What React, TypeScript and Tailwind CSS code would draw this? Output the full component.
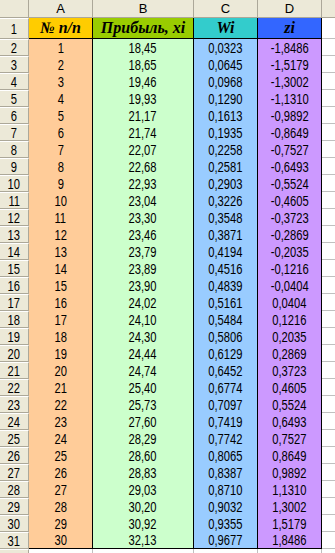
import React from 'react';

const rows: [string, string, string][] = [
  ['18,45', '0,0323', '-1,8486'],
  ['18,65', '0,0645', '-1,5179'],
  ['19,46', '0,0968', '-1,3002'],
  ['19,93', '0,1290', '-1,1310'],
  ['21,17', '0,1613', '-0,9892'],
  ['21,74', '0,1935', '-0,8649'],
  ['22,07', '0,2258', '-0,7527'],
  ['22,68', '0,2581', '-0,6493'],
  ['22,93', '0,2903', '-0,5524'],
  ['23,04', '0,3226', '-0,4605'],
  ['23,30', '0,3548', '-0,3723'],
  ['23,46', '0,3871', '-0,2869'],
  ['23,79', '0,4194', '-0,2035'],
  ['23,89', '0,4516', '-0,1216'],
  ['23,90', '0,4839', '-0,0404'],
  ['24,02', '0,5161', '0,0404'],
  ['24,10', '0,5484', '0,1216'],
  ['24,30', '0,5806', '0,2035'],
  ['24,44', '0,6129', '0,2869'],
  ['24,74', '0,6452', '0,3723'],
  ['25,40', '0,6774', '0,4605'],
  ['25,73', '0,7097', '0,5524'],
  ['27,60', '0,7419', '0,6493'],
  ['28,29', '0,7742', '0,7527'],
  ['28,60', '0,8065', '0,8649'],
  ['28,83', '0,8387', '0,9892'],
  ['29,03', '0,8710', '1,1310'],
  ['30,20', '0,9032', '1,3002'],
  ['30,92', '0,9355', '1,5179'],
  ['32,13', '0,9677', '1,8486'],
];

// squeezed Arial-like digits, like the old Excel screen font
function Num({ children }: { children: React.ReactNode }) {
  return <span className="inline-block scale-x-80 text-[14px] leading-none">{children}</span>;
}

function RowHead({ n }: { n: number }) {
  return (
    <div className="w-[29px] shrink-0 flex items-center justify-center bg-[#ECE9D8] border-r border-b border-[#ACA899] border-t border-t-white">
      <Num>{n}</Num>
    </div>
  );
}

export default function App() {
  return (
    <div className="w-[335px] h-[553px] overflow-hidden bg-white text-black font-['Liberation_Sans',Arial,sans-serif]">
      {/* column letters */}
      <div className="flex h-[18px] bg-[#ECE9D8] text-[13px] leading-none">
        <div className="w-[29px] shrink-0 border-r border-b border-[#ACA899]"></div>
        <div className="w-[64px] shrink-0 flex items-center justify-center border-r border-b border-[#ACA899]">A</div>
        <div className="w-[101px] shrink-0 flex items-center justify-center border-r border-b border-[#ACA899]">B</div>
        <div className="w-[64px] shrink-0 flex items-center justify-center border-r border-b border-[#ACA899]">C</div>
        <div className="w-[64px] shrink-0 flex items-center justify-center border-r border-b border-[#ACA899]">D</div>
        <div className="flex-1 border-b border-[#ACA899]"></div>
      </div>

      {/* title row */}
      <div className="flex h-[21px]">
        <RowHead n={1} />
        <div className="w-[64px] shrink-0 flex items-center justify-center bg-[#FFCC00] border-r border-b border-black font-['Liberation_Serif',serif] font-bold italic text-[16px] leading-none">
          № п/п
        </div>
        <div className="w-[101px] shrink-0 flex items-center justify-center bg-[#99CC00] border-r border-b border-black font-['Liberation_Serif',serif] font-bold italic text-[16px] leading-none">
          Прибыль, xi
        </div>
        <div className="w-[64px] shrink-0 flex items-center justify-center bg-[#33CCCC] border-r border-b border-black font-['Liberation_Serif',serif] font-bold italic text-[16px] leading-none">
          Wi
        </div>
        <div className="w-[64px] shrink-0 flex items-center justify-center bg-[#3366FF] border-r border-b border-black font-['Liberation_Serif',serif] font-bold italic text-[16px] leading-none">
          zi
        </div>
        <div className="flex-1 border-b border-[#C0C0C0]"></div>
      </div>

      {rows.map((r, i) => {
        const last = i === rows.length - 1;
        return (
          <div key={i} className="flex h-[17px]">
            <RowHead n={i + 2} />
            <div className={`w-[64px] shrink-0 flex items-center justify-center bg-[#FFCC99] border-r border-black ${last ? 'border-b' : ''}`}>
              <Num>{i + 1}</Num>
            </div>
            <div className={`w-[101px] shrink-0 flex items-center justify-center bg-[#CCFFCC] border-r border-black ${last ? 'border-b' : ''}`}>
              <Num>{r[0]}</Num>
            </div>
            <div className={`w-[64px] shrink-0 flex items-center justify-center bg-[#99CCFF] border-r border-black ${last ? 'border-b' : ''}`}>
              <Num>{r[1]}</Num>
            </div>
            <div className={`w-[64px] shrink-0 flex items-center justify-center bg-[#CC99FF] border-r border-black ${last ? 'border-b' : ''}`}>
              <Num>{r[2]}</Num>
            </div>
            <div className="flex-1 border-b border-[#C0C0C0]"></div>
          </div>
        );
      })}

      {/* partly visible next row */}
      <div className="flex h-[17px]">
        <RowHead n={32} />
        <div className="w-[64px] shrink-0 border-r border-[#C0C0C0]"></div>
        <div className="w-[101px] shrink-0 border-r border-[#C0C0C0]"></div>
        <div className="w-[64px] shrink-0 border-r border-[#C0C0C0]"></div>
        <div className="w-[64px] shrink-0 border-r border-[#C0C0C0]"></div>
        <div className="flex-1"></div>
      </div>
    </div>
  );
}
